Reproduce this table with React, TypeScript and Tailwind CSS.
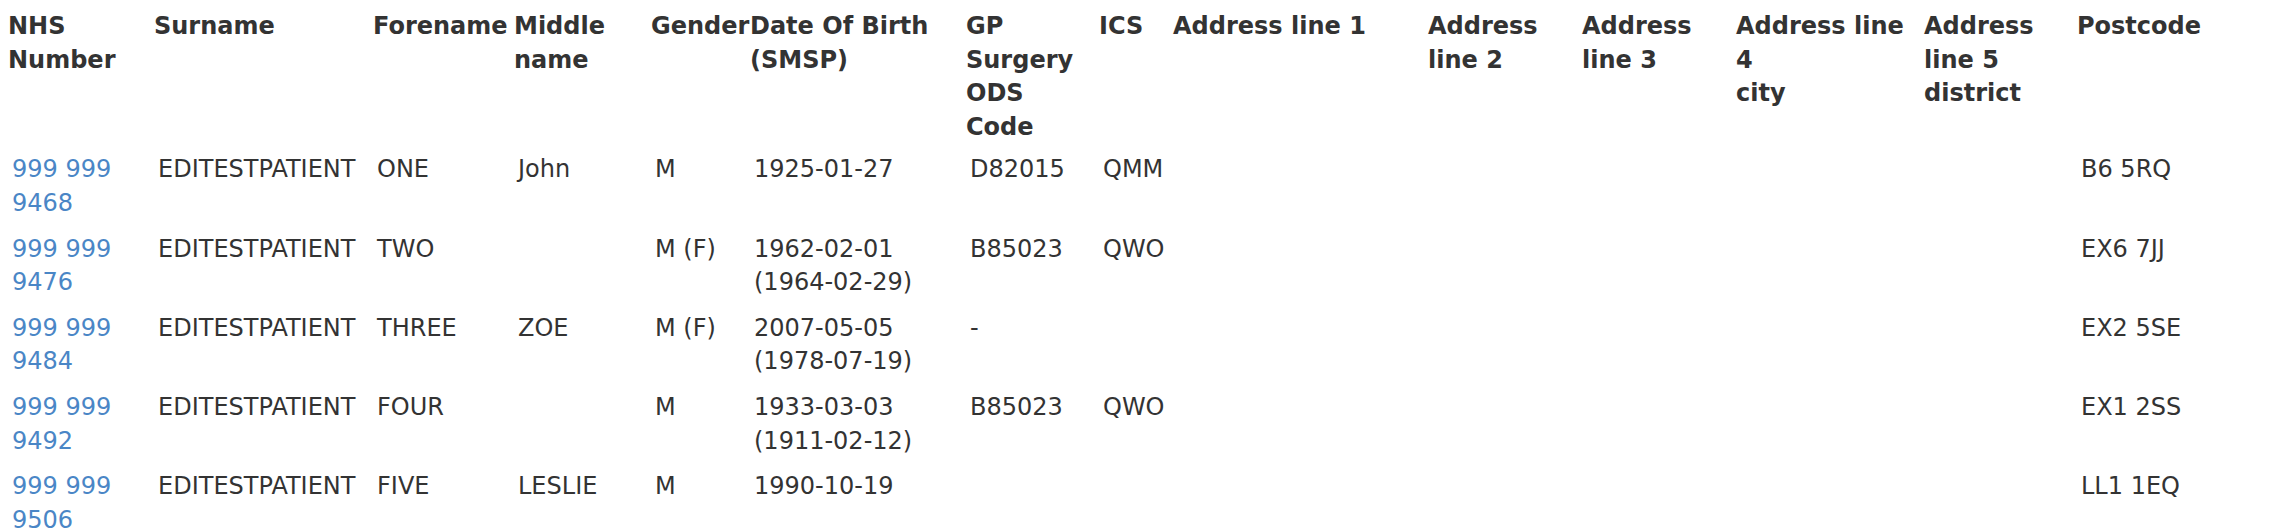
const columns = [
  { width: 'w-[146px]', label: ['NHS', 'Number'] },
  { width: 'w-[219px]', label: ['Surname'] },
  { width: 'w-[141px]', label: ['Forename'] },
  { width: 'w-[137px]', label: ['Middle', 'name'] },
  { width: 'w-[99px]', label: ['Gender'] },
  { width: 'w-[216px]', label: ['Date Of Birth', '(SMSP)'] },
  { width: 'w-[133px]', label: ['GP', 'Surgery', 'ODS', 'Code'] },
  { width: 'w-[74px]', label: ['ICS'] },
  { width: 'w-[255px]', label: ['Address line 1'] },
  { width: 'w-[154px]', label: ['Address', 'line 2'] },
  { width: 'w-[154px]', label: ['Address', 'line 3'] },
  { width: 'w-[188px]', label: ['Address line', '4', 'city'] },
  { width: 'w-[153px]', label: ['Address', 'line 5', 'district'] },
  { width: 'w-[219px]', label: ['Postcode'] },
];

interface Patient {
  nhs: string;
  surname: string;
  forename: string;
  middle: string;
  gender: string;
  dob: string[];
  gp: string;
  ics: string;
  postcode: string;
}

const patients: Patient[] = [
  { nhs: '999 999 9468', surname: 'EDITESTPATIENT', forename: 'ONE', middle: 'John', gender: 'M', dob: ['1925-01-27'], gp: 'D82015', ics: 'QMM', postcode: 'B6 5RQ' },
  { nhs: '999 999 9476', surname: 'EDITESTPATIENT', forename: 'TWO', middle: '', gender: 'M (F)', dob: ['1962-02-01', '(1964-02-29)'], gp: 'B85023', ics: 'QWO', postcode: 'EX6 7JJ' },
  { nhs: '999 999 9484', surname: 'EDITESTPATIENT', forename: 'THREE', middle: 'ZOE', gender: 'M (F)', dob: ['2007-05-05', '(1978-07-19)'], gp: '-', ics: '', postcode: 'EX2 5SE' },
  { nhs: '999 999 9492', surname: 'EDITESTPATIENT', forename: 'FOUR', middle: '', gender: 'M', dob: ['1933-03-03', '(1911-02-12)'], gp: 'B85023', ics: 'QWO', postcode: 'EX1 2SS' },
  { nhs: '999 999 9506', surname: 'EDITESTPATIENT', forename: 'FIVE', middle: 'LESLIE', gender: 'M', dob: ['1990-10-19'], gp: '', ics: '', postcode: 'LL1 1EQ' },
];

function Lines({ lines }: { lines: string[] }) {
  return (
    <>
      {lines.map((line, i) => (
        <div key={i}>{line}</div>
      ))}
    </>
  );
}

const td = 'pl-[12px] pt-[6px] pb-[6px] align-top whitespace-nowrap';

export default function App() {
  return (
    <div className="bg-white min-h-screen text-[#333333] text-[24px] leading-[1.4] font-['DejaVu_Sans',Verdana,sans-serif]">
      <table className="table-fixed w-[2288px] border-collapse">
        <colgroup>
          {columns.map((c, i) => (
            <col key={i} className={c.width} />
          ))}
        </colgroup>
        <thead>
          <tr>
            {columns.map((c, i) => (
              <th
                key={i}
                className="pl-[8px] pt-[10px] pb-[3px] text-left align-top font-bold whitespace-nowrap"
              >
                <Lines lines={c.label} />
              </th>
            ))}
          </tr>
        </thead>
        <tbody>
          {patients.map((p) => {
            const [first, second] = [p.nhs.slice(0, 7), p.nhs.slice(8)];
            return (
              <tr key={p.nhs}>
                <td className={td}>
                  <a href="#" className="text-[#4a86c6]">
                    <div>{first}</div>
                    <div>{second}</div>
                  </a>
                </td>
                <td className={td}>{p.surname}</td>
                <td className={td}>{p.forename}</td>
                <td className={td}>{p.middle}</td>
                <td className={td}>{p.gender}</td>
                <td className={td}>
                  <Lines lines={p.dob} />
                </td>
                <td className={td}>{p.gp}</td>
                <td className={td}>{p.ics}</td>
                <td className={td}></td>
                <td className={td}></td>
                <td className={td}></td>
                <td className={td}></td>
                <td className={td}></td>
                <td className={td}>{p.postcode}</td>
              </tr>
            );
          })}
        </tbody>
      </table>
    </div>
  );
}
